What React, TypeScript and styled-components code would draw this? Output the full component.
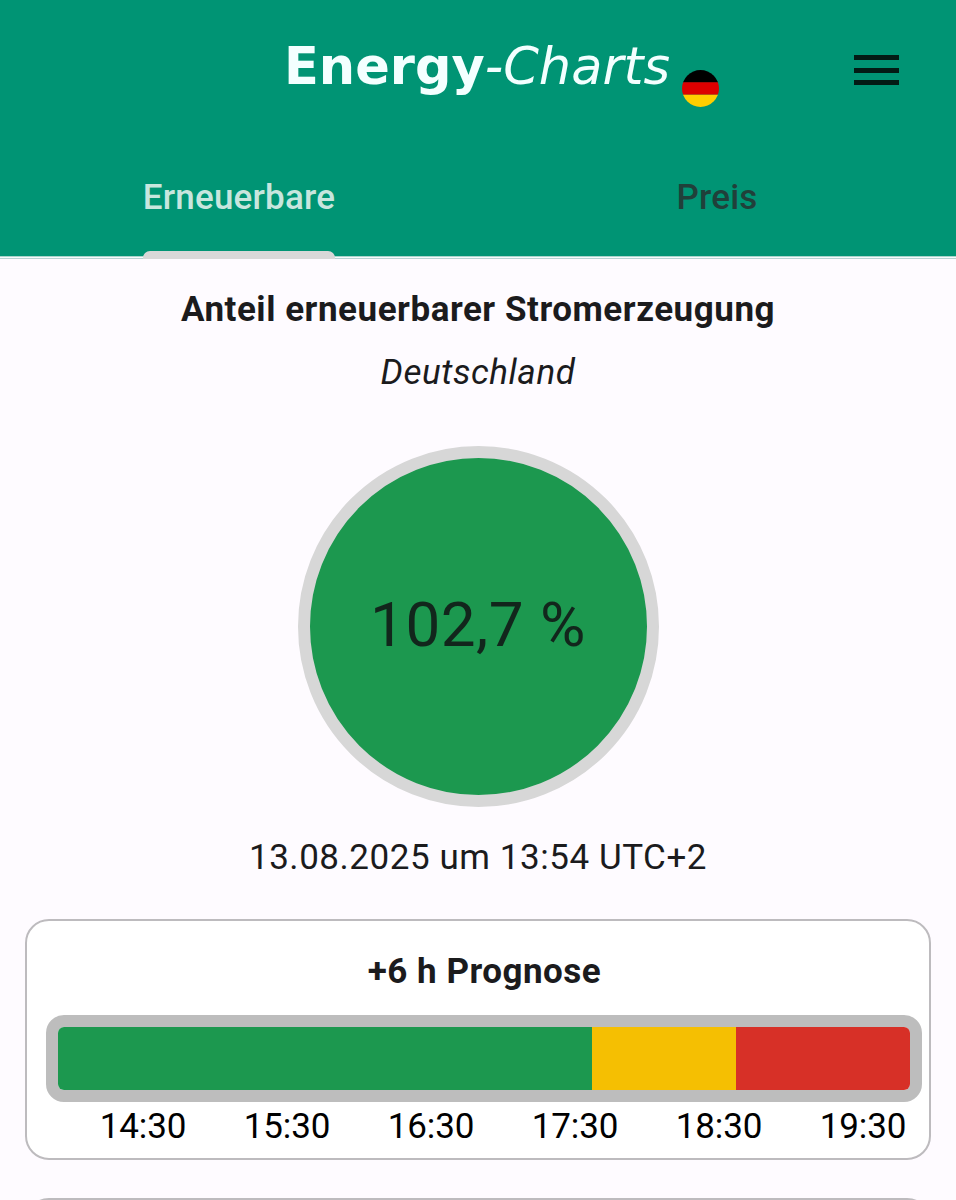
import React from 'react';
import styled, { createGlobalStyle } from 'styled-components';

const GlobalStyle = createGlobalStyle`
  * { box-sizing: border-box; }
  body { margin: 0; background: #fefbff; color: #1b1b1d; font-family: Roboto, sans-serif; overflow: hidden; }
`;

const Screen = styled.div`
  width: 956px;
  height: 1200px;
  overflow: hidden;
  display: flex;
  flex-direction: column;
`;
const Header = styled.header`
  height: 259px;
  flex: none;
  background: linear-gradient(#009474 0 256px, #a9d5cd 256px 257px, #f4fbfb 257px 258px, #b5d3d3 258px);
  display: flex;
  flex-direction: column;
`;
const Toolbar = styled.div`
  height: 140px;
  display: grid;
  grid-template-columns: 284px 386px 50px 1fr;
  align-items: start;
`;
const Brand = styled.h1`
  margin: 36px 0 0;
  color: #f3ffff;
  line-height: 62px;
  white-space: nowrap;
`;
const MenuButton = styled.button`
  margin: 55px 57px 0 0;
  padding: 0;
  border: 0;
  background: none;
  width: 45px;
  height: 30px;
  justify-self: end;
  display: flex;
  flex-direction: column;
  justify-content: space-between;
`;
const MenuLine = styled.span`
  width: 45px;
  height: 5px;
  background: #031b15;
`;
const Tabs = styled.nav`
  height: 119px;
  display: grid;
  grid-template-columns: 1fr 1fr;
`;
const Tab = styled.div<{ $active?: boolean }>`
  display: flex;
  flex-direction: column;
  align-items: center;
  justify-content: space-between;
  padding-top: 37px;
  color: ${p => (p.$active ? '#c8e6de' : '#20403a')};
`;
const Indicator = styled.span`
  width: 192px;
  height: 8px;
  border-radius: 7px 7px 0 0;
  background: #d8d8d8;
`;
const Line = styled.div<{ $mt: number; $shift?: number }>`
  height: 44px;
  line-height: 44px;
  margin-top: ${p => p.$mt}px;
  padding-left: ${p => p.$shift ?? 0}px;
  display: flex;
  justify-content: center;
`;
const Text = styled.span<{ $size: number; $weight?: number; $spacing?: number; $italic?: boolean }>`
  font-size: ${p => p.$size}px;
  font-weight: ${p => p.$weight ?? 400};
  letter-spacing: ${p => p.$spacing ?? 0}px;
  font-style: ${p => (p.$italic ? 'italic' : 'normal')};
  white-space: nowrap;
`;
const BrandText = styled.span<{ $light?: boolean }>`
  font-family: 'DejaVu Sans', sans-serif;
  font-size: 51px;
  font-weight: ${p => (p.$light ? 400 : 700)};
  font-style: ${p => (p.$light ? 'italic' : 'normal')};
  letter-spacing: 0.02px;
`;
const Flag = styled.svg`
  margin: 70px 0 0 12px;
  width: 37px;
  height: 37px;
`;
const Gauge = styled.div`
  width: 361px;
  height: 361px;
  margin: 51px 0 0 297.5px;
  padding-bottom: 4px;
  flex: none;
  border: 12.5px solid #d7d7d7;
  border-radius: 50%;
  background: #1c984f;
  color: #12261c;
  display: flex;
  align-items: center;
  justify-content: center;
`;
const Card = styled.section`
  width: 906px;
  height: 241px;
  flex: none;
  margin: 39px 0 0 25px;
  border: 2px solid #bdbbbe;
  border-radius: 24px;
  background: #fff;
`;
const Bar = styled.div`
  width: 876px;
  height: 87px;
  margin: 21px 0 0 19px;
  border: 12px solid #bdbdbd;
  border-radius: 18px;
  display: flex;
  overflow: hidden;
`;
const Segment = styled.div<{ $w: number; $color: string }>`
  width: ${p => p.$w}px;
  background: ${p => p.$color};
`;
const Times = styled.div`
  display: grid;
  grid-template-columns: repeat(6, 144px);
  margin: 4px 0 0 44px;
  text-align: center;
  color: #000;
  line-height: 42px;
`;
const NextCard = styled(Card)`
  margin-top: 38px;
`;

const hours = ['14:30', '15:30', '16:30', '17:30', '18:30', '19:30'];

export default function App() {
  return (
    <Screen>
      <GlobalStyle />
      <Header>
        <Toolbar>
          <span />
          <Brand>
            <BrandText>Energy</BrandText>
            <BrandText $light>-Charts</BrandText>
          </Brand>
          <Flag viewBox="0 0 38 38">
            <clipPath id="round"><circle cx="19" cy="19" r="19" /></clipPath>
            <g clipPath="url(#round)">
              <path fill="#000" d="M0 0h38v13H0z" />
              <path fill="#d00" d="M0 12.5h38v13H0z" />
              <path fill="#ffce00" d="M0 25.5h38v13H0z" />
            </g>
          </Flag>
          <MenuButton aria-label="Menü"><MenuLine /><MenuLine /><MenuLine /></MenuButton>
        </Toolbar>
        <Tabs>
          <Tab $active><Text $size={35} $weight={500} $spacing={0.2}>Erneuerbare</Text><Indicator /></Tab>
          <Tab><Text $size={35} $weight={500} $spacing={0.2}>Preis</Text></Tab>
        </Tabs>
      </Header>
      <Line $mt={29}><Text $size={35} $weight={700} $spacing={0.53}>Anteil erneuerbarer Stromerzeugung</Text></Line>
      <Line $mt={19}><Text $size={35} $spacing={0.55} $italic>Deutschland</Text></Line>
      <Gauge><Text $size={62} $spacing={0.5}>102,7 %</Text></Gauge>
      <Line $mt={29}><Text $size={35} $spacing={0.55}>13.08.2025 um 13:54 UTC+2</Text></Line>
      <Card>
        <Line $mt={29} $shift={13}><Text $size={35} $weight={700} $spacing={0.5}>+6 h Prognose</Text></Line>
        <Bar>
          <Segment $w={534} $color="#1c984f" />
          <Segment $w={144} $color="#f5bf02" />
          <Segment $w={174} $color="#d73027" />
        </Bar>
        <Times>{hours.map(h => <Text key={h} $size={35} $spacing={-0.1}>{h}</Text>)}</Times>
      </Card>
      <NextCard />
    </Screen>
  );
}
